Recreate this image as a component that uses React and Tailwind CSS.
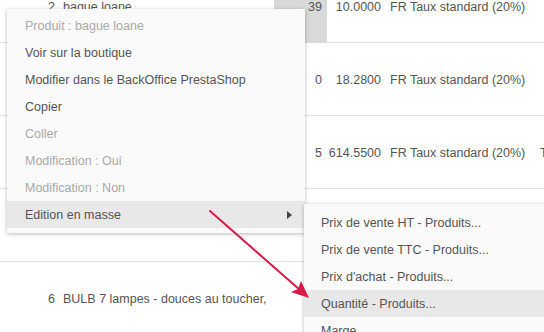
const rows = [
  { n: '2', name: 'bague loane', qty: '39', price: '10.0000', tax: 'FR Taux standard (20%)', extra: '', selected: true },
  { n: '', name: '', qty: '0', price: '18.2800', tax: 'FR Taux standard (20%)', extra: '' },
  { n: '', name: '', qty: '5', price: '614.5500', tax: 'FR Taux standard (20%)', extra: 'T' },
  { n: '', name: '', qty: '', price: '', tax: '', extra: '' },
  { n: '6', name: 'BULB 7 lampes - douces au toucher,', qty: '', price: '', tax: '', extra: '' },
]

const menuItems = [
  { label: 'Produit : bague loane', disabled: true },
  { label: 'Voir sur la boutique' },
  { label: 'Modifier dans le BackOffice PrestaShop' },
  { label: 'Copier' },
  { label: 'Coller', disabled: true },
  { label: 'Modification : Oui', disabled: true },
  { label: 'Modification : Non', disabled: true },
  { label: 'Edition en masse', active: true, submenu: true },
]

const subItems = [
  { label: 'Prix de vente HT - Produits...' },
  { label: 'Prix de vente TTC - Produits...' },
  { label: "Prix d'achat - Produits..." },
  { label: 'Quantité - Produits...', active: true },
  { label: 'Marge' },
]

function Row({ row }) {
  return (
    <div className="flex h-[73px] items-center border-b border-[#e2e2e2] pt-[3px] whitespace-nowrap">
      <div className="w-[59px] shrink-0 pr-[4px] text-right">{row.n}</div>
      <div className="w-[215px] shrink-0 pl-[4px]">{row.name}</div>
      <div
        className={`-mt-[3px] flex h-[73px] w-[53px] shrink-0 items-center justify-end pt-[2px] pr-[5px] ${
          row.selected ? 'bg-[#d9d9d9]' : ''
        }`}
      >
        {row.qty}
      </div>
      <div className="w-[58px] shrink-0 pr-[4px] text-right">{row.price}</div>
      <div className="w-[151px] shrink-0 pl-[5px]">{row.tax}</div>
      <div className="pl-[4px]">{row.extra}</div>
    </div>
  )
}

function MenuItem({ item, padLeft }) {
  return (
    <div
      className={`flex h-[27px] items-center justify-between whitespace-nowrap pt-[2px] ${padLeft} pr-[13px] ${
        item.active ? 'bg-[#e8e8e8]' : ''
      } ${item.disabled ? 'text-[#a9a9a9]' : 'text-[#555]'}`}
    >
      <span>{item.label}</span>
      {item.submenu ? (
        <span className="-mt-[2px] h-0 w-0 border-y-[4px] border-l-[5px] border-y-transparent border-l-[#444]" />
      ) : null}
    </div>
  )
}

export default function App() {
  return (
    <div
      className="relative h-[332px] w-[544px] overflow-hidden bg-white text-[12.5px] text-[#555]"
      style={{ fontFamily: '"Liberation Sans", Arial, sans-serif' }}
    >
      <div className="-mt-[30px]">
        {rows.map((row, i) => (
          <Row key={i} row={row} />
        ))}
      </div>

      <div className="absolute left-[7px] top-[9px] w-[298px] bg-[#fafafa] pt-[3px] pb-[5px] shadow-[0_1px_4px_rgba(0,0,0,0.28)]">
        {menuItems.map((item) => (
          <MenuItem key={item.label} item={item} padLeft="pl-[18px]" />
        ))}
      </div>

      <div className="absolute left-[304px] top-[204px] w-[260px] bg-[#fafafa] pt-[5px] shadow-[0_1px_4px_rgba(0,0,0,0.28)]">
        {subItems.map((item) => (
          <MenuItem key={item.label} item={item} padLeft="pl-[17px]" />
        ))}
      </div>

      <svg className="pointer-events-none absolute inset-0" width="544" height="332" viewBox="0 0 544 332">
        <line x1="210" y1="211" x2="300" y2="290" stroke="#d81b46" strokeWidth="2" strokeLinecap="round" />
        <polygon points="309,298 291,292 298,289 301,281" fill="#d81b46" />
      </svg>
    </div>
  )
}
